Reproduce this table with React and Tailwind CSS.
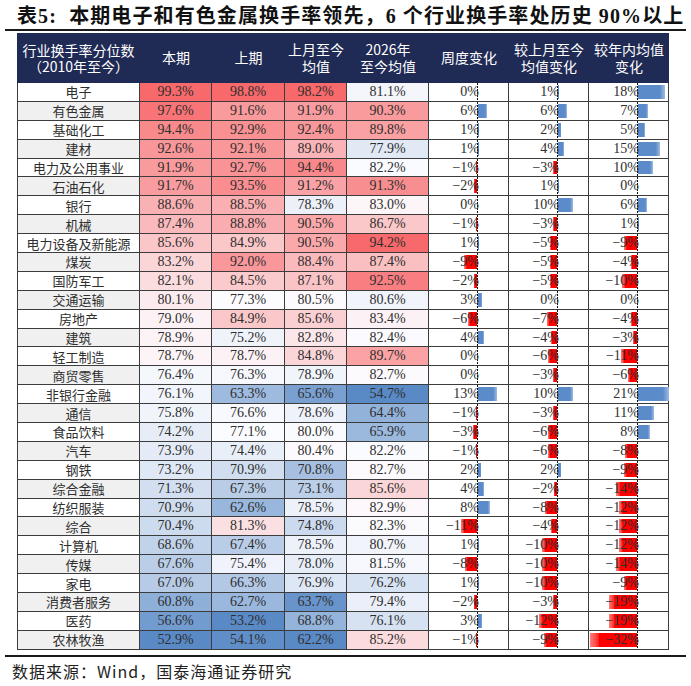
import React from 'react';

const rows = [
  ['电子', 99.3, 98.8, 98.2, 81.1, 0, 1, 18],
  ['有色金属', 97.6, 91.6, 91.9, 90.3, 6, 6, 7],
  ['基础化工', 94.4, 92.9, 92.4, 89.8, 1, 2, 5],
  ['建材', 92.6, 92.1, 89.0, 77.9, 1, 4, 15],
  ['电力及公用事业', 91.9, 92.7, 94.4, 82.2, -1, -3, 10],
  ['石油石化', 91.7, 93.5, 91.2, 91.3, -2, 1, 0],
  ['银行', 88.6, 88.5, 78.3, 83.0, 0, 10, 6],
  ['机械', 87.4, 88.8, 90.5, 86.7, -1, -3, 1],
  ['电力设备及新能源', 85.6, 84.9, 90.5, 94.2, 1, -5, -9],
  ['煤炭', 83.2, 92.0, 88.4, 87.4, -9, -5, -4],
  ['国防军工', 82.1, 84.5, 87.1, 92.5, -2, -5, -10],
  ['交通运输', 80.1, 77.3, 80.5, 80.6, 3, 0, 0],
  ['房地产', 79.0, 84.9, 85.6, 83.4, -6, -7, -4],
  ['建筑', 78.9, 75.2, 82.8, 82.4, 4, -4, -3],
  ['轻工制造', 78.7, 78.7, 84.8, 89.7, 0, -6, -11],
  ['商贸零售', 76.4, 76.3, 78.9, 82.7, 0, -3, -6],
  ['非银行金融', 76.1, 63.3, 65.6, 54.7, 13, 10, 21],
  ['通信', 75.8, 76.6, 78.6, 64.4, -1, -3, 11],
  ['食品饮料', 74.2, 77.1, 80.0, 65.9, -3, -6, 8],
  ['汽车', 73.9, 74.4, 80.4, 82.2, -1, -6, -8],
  ['钢铁', 73.2, 70.9, 70.8, 82.7, 2, 2, -9],
  ['综合金融', 71.3, 67.3, 73.1, 85.6, 4, -2, -14],
  ['纺织服装', 70.9, 62.6, 78.5, 82.9, 8, -8, -12],
  ['综合', 70.4, 81.3, 74.8, 82.3, -11, -4, -12],
  ['计算机', 68.6, 67.4, 78.5, 80.7, 1, -10, -12],
  ['传媒', 67.6, 75.4, 78.0, 81.5, -8, -10, -14],
  ['家电', 67.0, 66.3, 76.9, 76.2, 1, -10, -9],
  ['消费者服务', 60.8, 62.7, 63.7, 79.4, -2, -3, -19],
  ['医药', 56.6, 53.2, 68.8, 76.1, 3, -12, -19],
  ['农林牧渔', 52.9, 54.1, 62.2, 85.2, -1, -9, -32],
];

const heatWidths = ['w-[72px]', 'w-[73px]', 'w-[62px]', 'w-[82px]'];

// excel style 3-colour scale, midpoint = median of the column
const LO = [90, 138, 198];
const MID = [252, 252, 255];
const HI = [248, 105, 107];

function median(arr) {
  const s = [...arr].sort((a, b) => a - b);
  const n = s.length;
  return n % 2 ? s[(n - 1) / 2] : (s[n / 2 - 1] + s[n / 2]) / 2;
}

const scales = [1, 2, 3, 4].map((i) => {
  const col = rows.map((r) => r[i]);
  return { min: Math.min(...col), max: Math.max(...col), mid: median(col) };
});

function heat(v, { min, mid, max }) {
  let to, t;
  if (v >= mid) {
    to = HI;
    t = max === mid ? 0 : (v - mid) / (max - mid);
  } else {
    to = LO;
    t = mid === min ? 0 : (mid - v) / (mid - min);
  }
  const c = MID.map((m, k) => Math.round(m + (to[k] - m) * t));
  return `rgb(${c[0]},${c[1]},${c[2]})`;
}

const PX_PER_PCT = 1.48;

function BarCell({ value }) {
  const w = Math.abs(value) * PX_PER_PCT;
  const label = (value < 0 ? '−' : '') + Math.abs(value) + '%';
  return (
    <div className="relative w-[80px] h-full border-r border-[#3c3c3c] bg-white flex items-center justify-end pr-[29px]">
      {value > 0 && (
        <div
          className="absolute left-[49px] top-[2px] bottom-[2px] bg-linear-to-r from-[#5b8bc9] from-80% to-[#9fbbe2]"
          style={{ width: w }}
        />
      )}
      {value < 0 && (
        <div
          className="absolute top-[2px] bottom-[2px] bg-linear-to-l from-[#ff0000] from-80% to-[#ff7a7a]"
          style={{ width: w, left: 48 - w }}
        />
      )}
      <div className="absolute left-[48px] top-0 bottom-0 w-px bg-[repeating-linear-gradient(to_bottom,#111_0_2px,transparent_2px_3px)]" />
      <span className="relative z-10 font-['Liberation_Serif',serif] text-[14px] text-[#2e2e2e] leading-none">
        {label}
      </span>
    </div>
  );
}

function HeadCell({ w, lines, tight }) {
  return (
    <div className={`${w} h-full flex flex-col items-center justify-center text-white text-[14px] ${tight ? 'leading-[16px]' : 'leading-[17.5px]'}`}>
      {lines.map((l) => (
        <span key={l}>{l}</span>
      ))}
    </div>
  );
}

export default function App() {
  return (
    <div className="w-[691px] h-[686px] bg-white font-['Noto_Sans_CJK_SC',sans-serif] text-[#2e2e2e]">
      {/* title */}
      <div className="mx-[5px] h-[31px] border-b-2 border-[#1a1a1a] flex items-center pl-[12px] pt-[2px]">
        <h1 className="font-['Liberation_Serif','Noto_Sans_CJK_SC',serif] font-bold text-[20px] tracking-[1.1px] text-[#111] whitespace-nowrap leading-none">
          表5:&nbsp; 本期电子和有色金属换手率领先，6 个行业换手率处历史 90%以上
        </h1>
      </div>

      {/* table */}
      <div className="ml-[17px] mt-[2px] w-[652px]">
        <div className="h-[50px] bg-[#1f2a55] flex">
          <HeadCell w="w-[123px]" lines={['行业换手率分位数', '（2010年至今）']} tight />
          <HeadCell w="w-[72px]" lines={['本期']} />
          <HeadCell w="w-[73px]" lines={['上期']} />
          <HeadCell w="w-[62px]" lines={['上月至今', '均值']} />
          <HeadCell w="w-[82px]" lines={['2026年', '至今均值']} />
          <HeadCell w="w-[80px]" lines={['周度变化']} />
          <HeadCell w="w-[80px]" lines={['较上月至今', '均值变化']} />
          <HeadCell w="w-[80px]" lines={['较年内均值', '变化']} />
        </div>
        <div className="border-l border-[#3c3c3c]">
          {rows.map((r, i) => (
            <div key={r[0]} className="h-[18.9px] flex border-b border-[#3c3c3c]">
              <div
                className={`w-[122px] h-full border-r border-[#3c3c3c] flex items-center justify-center text-[13px] leading-none ${
                  i % 2 ? 'bg-[#f0f0f0]' : 'bg-white'
                }`}
              >
                {r[0]}
              </div>
              {[1, 2, 3, 4].map((k, j) => (
                <div
                  key={k}
                  className={`${heatWidths[j]} h-full border-r border-[#3c3c3c] flex items-center justify-center font-['Liberation_Serif',serif] text-[14px] leading-none`}
                  style={{ backgroundColor: heat(r[k], scales[j]) }}
                >
                  {r[k].toFixed(1)}%
                </div>
              ))}
              <BarCell value={r[5]} />
              <BarCell value={r[6]} />
              <BarCell value={r[7]} />
            </div>
          ))}
        </div>
      </div>

      {/* source */}
      <div className="mx-[5px] mt-[5px] border-t-2 border-[#1a1a1a]" />
      <div className="h-[28px] flex items-center pl-[12px] text-[16px] tracking-[1px] text-[#222]">
        数据来源：Wind，国泰海通证券研究
      </div>
    </div>
  );
}
